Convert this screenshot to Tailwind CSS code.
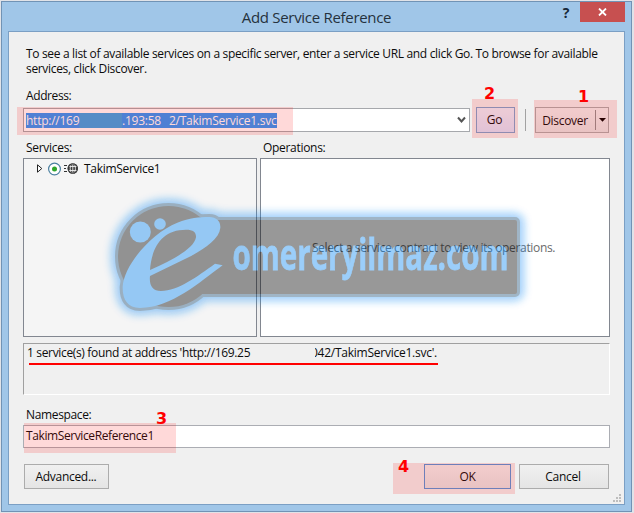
<!DOCTYPE html>
<html lang="en">
<head>
<meta charset="utf-8">
<title>Add Service Reference</title>
<script src="https://cdn.jsdelivr.net/npm/@tailwindcss/browser@4"></script>
</head>
<body class="w-[634px] h-[513px] overflow-hidden bg-[#e1e3e8] p-px">
<div class="relative w-[631px] h-[511px] border border-[#7193b5] bg-[#a0c6e8] font-['Open_Sans','Noto_Sans',sans-serif] text-[12px] leading-[15px] text-[#0c0c0c] tracking-[-0.3px] whitespace-nowrap px-[6px]">
  <header class="h-[29px] flex items-start">
    <div class="flex-1 pl-[69px] pt-[6px] text-center text-[15px] leading-[18px] tracking-[-0.3px] text-[#25323d]">Add Service Reference</div>
    <div class="w-[20px] pt-[2px] mr-[4px] text-center text-[14px] leading-[18px] font-bold text-[#182838]">?</div>
    <button class="w-[45px] h-[20px] bg-[#c75050] flex items-center justify-center" aria-label="Close">
      <svg width="9" height="8" viewBox="0 0 9 8"><path d="M1 .5 8 7.5M8 .5 1 7.5" stroke="#fff" stroke-width="1.8"/></svg>
    </button>
  </header>
  <main class="w-[617px] h-[474px] border border-[#7b9fc4] bg-[#f0f0f0] pl-[14px] pr-[14px] flex flex-col">
    <p class="mt-[14px] ml-[3px] h-[30px] tracking-[-0.33px]">To see a list of available services on a specific server, enter a service URL and click Go. To browse for available<br>services, click Discover.</p>
    <label class="mt-[12px] ml-[3px] h-[15px] tracking-[-0.4px]">Address:</label>
    <div class="mt-[3px] h-[28px] flex items-center">
      <div class="w-[447px] h-[24px] border border-[#a6a8ac] bg-white flex items-center justify-between pl-[2px] pr-[3px]">
        <div class="w-[251px] h-[15px] bg-[#3196f9] text-white leading-[15px] tracking-[-0.25px] flex">
          <span class="w-[96px] bg-linear-to-r from-transparent from-55% to-[#38a5e9] to-56%">http://169</span><span class="w-[47px]">.193:58</span><span>2/TakimService1.svc</span>
        </div>
        <svg width="9" height="8" viewBox="0 0 9 8"><path d="M1 1.5 4.5 5.5 8 1.5" fill="none" stroke="#555" stroke-width="2"/></svg>
      </div>
      <button class="ml-[6px] w-[39px] h-[26px] border border-[#7ba3d0] bg-linear-to-b from-[#eaf0fb] to-[#dce4fb] pr-[2px] pb-px">Go</button>
      <div class="ml-[10px] w-px h-[22px] bg-[#a2a2a2]"></div>
      <div class="ml-[9px] w-[74px] h-[26px] border border-[#acacac] bg-linear-to-b from-[#f0f0f0] to-[#e5e5e5] flex items-center">
        <div class="w-[59px] text-center pr-px">Discover</div>
        <div class="w-px h-[20px] bg-[#8f8f8f]"></div>
        <svg class="ml-[3px]" width="7" height="4" viewBox="0 0 7 4"><path d="M0 0H7L3.5 3.8Z" fill="#000"/></svg>
      </div>
    </div>
    <div class="mt-[6px] h-[15px] flex pl-[3px] tracking-[-0.3px]"><span class="w-[237px]">Services:</span><span>Operations:</span></div>
    <div class="mt-[3px] h-[179px] flex gap-[3px]">
      <section class="w-[234px] border border-[#828790] bg-[#f5f5f5] pt-[2px]">
        <div class="h-[15px] flex items-center">
          <svg class="ml-[13px]" width="6" height="9" viewBox="0 0 6 9"><path d="M.5.8V8.2L4.8 4.5Z" fill="#fff" stroke="#222"/></svg>
          <svg class="ml-[5px]" width="14" height="14" viewBox="0 0 14 14"><circle cx="6.5" cy="7" r="5.9" fill="#fff" stroke="#4a7f9f" stroke-width="1.2"/><circle cx="6.5" cy="7" r="2.5" fill="#2fa62b"/></svg>
          <svg class="ml-[2px]" width="15" height="11" viewBox="0 0 15 11"><path d="M0 2.5H3M0 5.5H2M0 8.5H3" stroke="#333"/><circle cx="8.8" cy="5.5" r="5.2" fill="#3c3c3c"/><g fill="none" stroke="#eee" stroke-width=".9"><path d="M4 3.5H13.5M4 7.5H13.5M8.8 .8V10.2"/><ellipse cx="8.8" cy="5.5" rx="2.6" ry="4.7"/></g><circle cx="8.8" cy="5.5" r="4.6" fill="none" stroke="#3c3c3c" stroke-width="1.2"/></svg>
          <span class="ml-[5px]">TakimService1</span>
        </div>
      </section>
      <section class="w-[350px] border border-[#828790] bg-white flex items-center justify-center text-[#6b6b6b] tracking-[-0.34px] pr-[3px]">Select a service contract to view its operations.</section>
    </div>
    <div class="mt-[6px] w-[587px] h-[52px] border border-t-[#a0a0a0] border-l-[#a0a0a0] border-r-white border-b-white pl-[3px] pt-px flex">
      <span class="w-[288px] tracking-[-0.34px]">1 service(s) found at address 'http://169.25</span><span class="w-[130px] h-[15px] overflow-hidden tracking-[-0.25px]"><span class="-ml-[4px]">042/TakimService1.svc'.</span></span>
    </div>
    <label class="mt-[12px] ml-[3px] h-[15px] tracking-[-0.35px]">Namespace:</label>
    <div class="mt-[3px] w-[587px] h-[23px] border border-[#abadb3] bg-white pl-[2px] pt-[2px] tracking-[-0.4px]">TakimServiceReference1</div>
    <div class="mt-[16px] ml-px w-[585px] h-[25px] flex">
      <button class="w-[85px] border border-[#acacac] bg-linear-to-b from-[#f0f0f0] to-[#e5e5e5] pr-px">Advanced...</button>
      <button class="ml-auto w-[87px] border border-[#5595da] bg-linear-to-b from-[#f0f0f0] to-[#e5e5e5]">OK</button>
      <button class="ml-[8px] w-[90px] border border-[#acacac] bg-linear-to-b from-[#f0f0f0] to-[#e5e5e5] pr-[2px]">Cancel</button>
    </div>
    <svg class="mt-[5px] self-end -mr-[11px]" width="8" height="8" viewBox="0 0 8 8" fill="#bdbdbd"><path d="M6 0h2v2H6zM3 3h2v2H3zM6 3h2v2H6zM0 6h2v2H0zM3 6h2v2H3zM6 6h2v2H6z"/></svg>
  </main>
</div>

<!-- Site watermark laid over the dialog -->
<svg class="absolute left-0 top-0 opacity-40" width="634" height="513" viewBox="0 0 634 513">
  <defs>
    <filter id="glow" x="-20%" y="-30%" width="140%" height="160%"><feGaussianBlur stdDeviation="4.5"/></filter>
    <g id="shape">
      <circle cx="168.5" cy="256.5" r="50.5"/>
      <rect x="168" y="220" width="349" height="74" rx="2"/>
    </g>
    <path id="e" fill-rule="evenodd" transform="translate(100 190) scale(.33333)" d="M368 226C300 275 215 354 120 354C82 354 67 328 68 290C72 225 155 128 232 98C270 84 296 81 328 81C350 82 362 93 361 113C358 145 320 171 275 197L150 258C147 285 157 303 183 303C235 302 292 259 345 221ZM150 240C155 174 184 119 258 119C281 119 289 128 288 142C283 174 225 207 150 240Z"/>
  </defs>
  <g filter="url(#glow)" fill="#0887f3" stroke="#0887f3" stroke-linejoin="round"><g stroke-width="14"><use href="#shape"/></g><use href="#e" stroke-width="42"/></g>
  <g fill="#144873" stroke="#144873" stroke-linejoin="round"><g stroke-width="6"><use href="#shape"/></g><use href="#e" stroke-width="18"/></g>
  <use href="#shape" fill="#000"/>
  <g fill="#0887f3">
    <use href="#e"/>
    <circle cx="140.3" cy="232" r="10.5"/><circle cx="160" cy="224" r="5.8"/>
    <text x="232.5" y="269.5" stroke="#0887f3" stroke-width=".8" font-family="'Open Sans','Noto Sans',sans-serif" font-weight="700" font-size="43" textLength="276" lengthAdjust="spacingAndGlyphs">omereryilmaz.com</text>
  </g>
</svg>

<!-- Step annotations -->
<div class="absolute inset-0 w-[634px] h-[513px] font-['DejaVu_Sans',sans-serif] font-bold text-[16px] leading-[16px] text-[#ff0000]">
  <div class="absolute left-[17px] top-[107px] w-[276px] h-[28px] bg-[#ff0000]/15"></div>
  <div class="absolute left-[472px] top-[99px] w-[46px] h-[39px] bg-[#ff0000]/15"></div>
  <div class="absolute left-[534px] top-[100px] w-[83px] h-[38px] bg-[#ff0000]/15"></div>
  <div class="absolute left-[24px] top-[423px] w-[152px] h-[30px] bg-[#ff0000]/15"></div>
  <div class="absolute left-[393px] top-[463px] w-[122px] h-[31px] bg-[#ff0000]/15"></div>
  <div class="absolute left-[29px] top-[363px] w-[409px] h-[2px] bg-[#ff0000]"></div>
  <span class="absolute left-[578px] top-[89px]">1</span>
  <span class="absolute left-[484px] top-[86px]">2</span>
  <span class="absolute left-[156px] top-[411px]">3</span>
  <span class="absolute left-[398px] top-[459px]">4</span>
</div>
</body>
</html>
